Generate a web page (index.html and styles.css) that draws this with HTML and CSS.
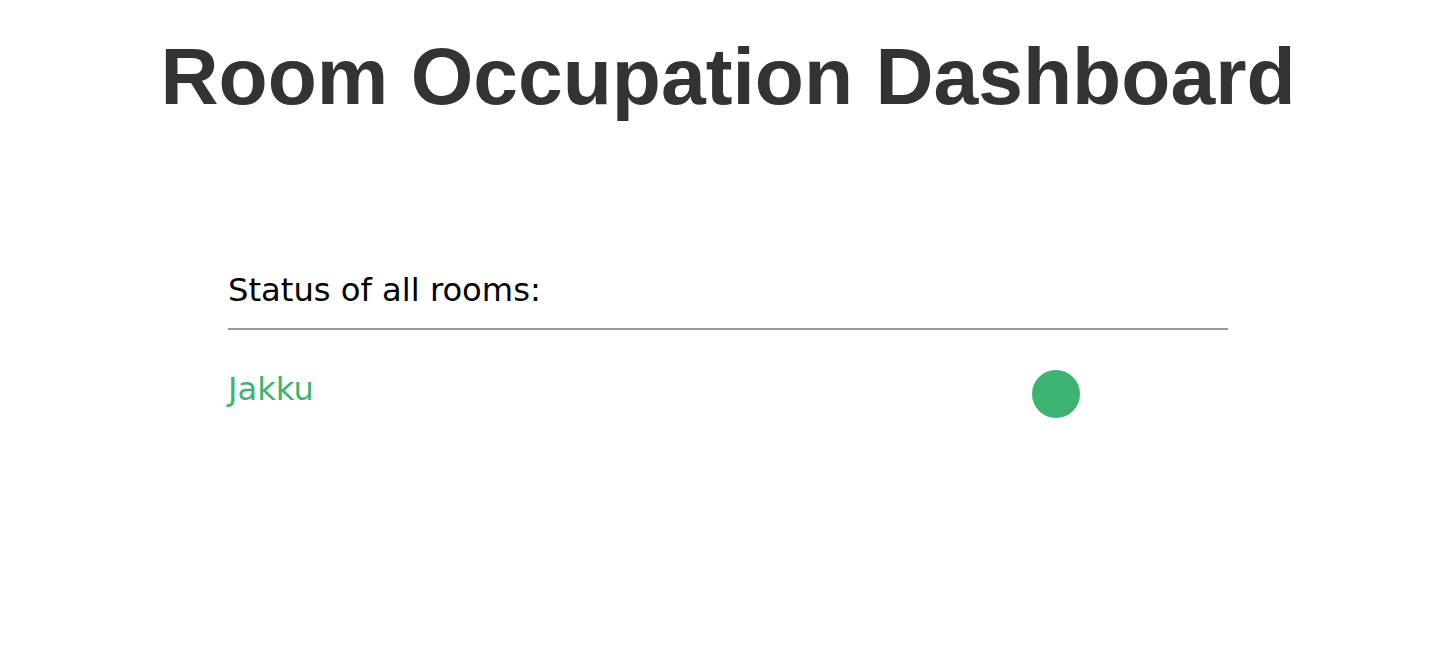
FILE: index.html
```html
<!DOCTYPE html>
<html lang="en">
<head>
<meta charset="utf-8">
<title>Room Occupation Dashboard</title>
<link rel="stylesheet" href="styles.css">
</head>
<body>
  <h1 class="title">Room Occupation Dashboard</h1>
  <main class="panel">
    <h2 class="panel-heading">Status of all rooms:</h2>
    <hr class="divider">
    <ul class="rooms">
      <li class="room">
        <span class="room-name free">Jakku</span>
        <span class="room-status"><span class="dot free-dot"></span></span>
      </li>
    </ul>
  </main>
</body>
</html>
```

FILE: styles.css
```css
html, body {
  margin: 0;
  background: #ffffff;
}

body {
  padding-left: 4px;
  font-family: "DejaVu Sans", sans-serif;
}

.title {
  margin: 36px 0 0;
  font-family: "Liberation Sans", Arial, sans-serif;
  font-weight: bold;
  font-size: 80.45px;
  line-height: 80px;
  color: #333333;
  text-align: center;
}

.panel {
  width: 1000px;
  margin: 158px auto 0;
}

.panel-heading {
  margin: 0;
  font-weight: normal;
  font-size: 32.2px;
  line-height: 32px;
  color: #000000;
}

.divider {
  margin: 22px 0 0;
  border: 0;
  height: 2px;
  background: #999999;
}

.rooms {
  list-style: none;
  margin: 40px 0 0;
  padding: 0;
}

.room {
  display: grid;
  grid-template-columns: 1fr 196px;
  align-items: start;
}

.room-name {
  margin-top: 3px;
  font-size: 32.2px;
  line-height: 32px;
}

.free {
  color: #3cb371;
}

.dot {
  display: block;
  width: 48px;
  height: 48px;
  border-radius: 50%;
}

.free-dot {
  background: #3cb371;
}
```
